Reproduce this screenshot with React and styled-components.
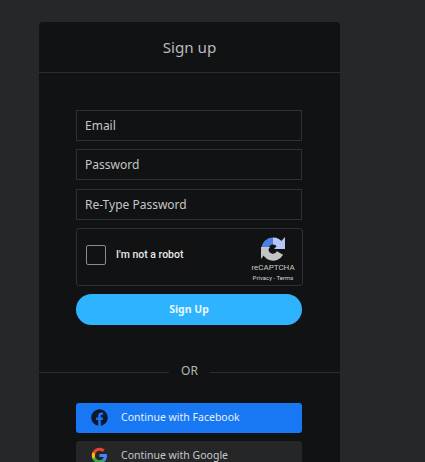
import styled, { createGlobalStyle } from "styled-components";
import { FaFacebook } from "react-icons/fa";

const GlobalStyle = createGlobalStyle`
  html, body {
    margin: 0;
    height: 100%;
    overflow: hidden;
    background: #25272a;
    font-family: "Noto Sans", sans-serif;
  }
`;

const Page = styled.div`
  padding: 22px 85px 0 39px;
  height: 440px;
  overflow: hidden;
`;

const Card = styled.div`
  width: 301px;
  height: 500px;
  background: #111213;
  border-radius: 4px 4px 0 0;
`;

const Header = styled.h1`
  margin: 0;
  height: 50px;
  display: flex;
  align-items: center;
  justify-content: center;
  border-bottom: 1px solid #2b2d30;
  font-size: 15.2px;
  font-weight: 400;
  color: #b9bbbd;
`;

const Form = styled.form`
  padding: 37px 38px 0 37px;
  display: flex;
  flex-direction: column;
`;

const Input = styled.input`
  box-sizing: border-box;
  width: 226px;
  height: 31px;
  margin-bottom: 8.25px;
  padding: 0 8px;
  background: transparent;
  border: 1px solid #2e3033;
  outline: none;
  font-family: inherit;
  font-size: 12px;
  color: #c4c5c7;
  &::placeholder {
    color: #c4c5c7;
    opacity: 1;
  }
`;

const Captcha = styled.div`
  box-sizing: border-box;
  width: 227px;
  height: 58px;
  padding: 0 7px 0 9px;
  display: flex;
  align-items: center;
  border: 1px solid #2e3033;
  border-radius: 3px;
`;

const Check = styled.div`
  box-sizing: border-box;
  width: 20px;
  height: 20px;
  margin-bottom: 4px;
  border: 1px solid #8a8b8c;
  border-radius: 2px;
`;

const CaptchaLabel = styled.span`
  margin: 0 0 4px 10px;
  flex: 1;
  font-family: Roboto, sans-serif;
  font-size: 10.5px;
  font-weight: 500;
  color: #e8e8e8;
`;

const Brand = styled.div`
  width: 44px;
  margin-top: 4px;
  display: flex;
  flex-direction: column;
  align-items: center;
  color: #c9c9c9;
  font-family: Roboto, sans-serif;
`;

const BrandName = styled.span`
  font-size: 8px;
  line-height: 12px;
  margin-top: 1px;
`;

const BrandLinks = styled.span`
  font-size: 6px;
  line-height: 8px;
  white-space: nowrap;
  color: #d6d6d6;
`;

const Submit = styled.button`
  width: 226px;
  height: 31px;
  margin-top: 8px;
  border: none;
  border-radius: 16px;
  background: #2eb4ff;
  color: #e8f6ff;
  font-family: inherit;
  font-size: 10.5px;
  font-weight: 700;
`;

const Divider = styled.div`
  margin-top: 38px;
  height: 20px;
  display: flex;
  align-items: center;
  gap: 12px;
  font-size: 12px;
  color: #b4b6b8;
  &::before,
  &::after {
    content: "";
    flex: 1;
    height: 1px;
    background: #2b2d30;
  }
`;

const DividerLabel = styled.span`
  padding-bottom: 4px;
`;

const Socials = styled.div`
  padding: 20px 38px 0 37px;
  display: flex;
  flex-direction: column;
  gap: 8px;
`;

const Social = styled.button`
  width: 226px;
  height: 30px;
  padding: 0 0 0 15px;
  display: flex;
  align-items: center;
  gap: 13px;
  border: none;
  border-radius: 3px;
  background: ${(p) => p.$bg};
  color: ${(p) => p.$color};
  font-family: inherit;
  font-size: 10.5px;
  svg {
    flex: none;
  }
`;

const SocialLabel = styled.span`
  padding-bottom: 2px;
`;

const FacebookIcon = styled(FaFacebook)`
  color: #10192b;
`;

function RecaptchaLogo() {
  return (
    <svg width="24" height="25" viewBox="0 0 24 25" fill="none">
      <path d="M4 13 A8 8 0 0 1 12 5" stroke="#4c7fe0" strokeWidth="7" />
      <path d="M12 5 A8 8 0 0 1 19 9" stroke="#b7c6f6" strokeWidth="7" />
      <path d="M24 1 V13 H13 Z" fill="#b7c6f6" />
      <path d="M4 13 A8 8 0 0 0 19 17" stroke="#c4c4c4" strokeWidth="7" />
      <path d="M0 23 V11 H9 Z" fill="#c4c4c4" />
    </svg>
  );
}

function GoogleIcon() {
  return (
    <svg width="17" height="17" viewBox="0 0 48 48">
      <path fill="#4285F4" d="M45.1 24.5c0-1.6-.1-3.1-.4-4.500H24v8.500h11.800c-.5 2.800-2 5.100-4.400 6.700v5.600h7.100c4.200-3.800 6.600-9.500 6.600-16.300z" />
      <path fill="#34A853" d="M24 46c5.900 0 10.900-2 14.500-5.300l-7.100-5.500c-2 1.300-4.500 2.100-7.400 2.100-5.700 0-10.500-3.800-12.200-9H4.500v5.700C8.100 41.200 15.500 46 24 46z" />
      <path fill="#FBBC05" d="M11.800 28.300c-.4-1.300-.7-2.800-.7-4.300s.3-3 .7-4.300V14H4.500C3 17 2.200 20.400 2.200 24s.8 7 2.300 10l7.300-5.700z" />
      <path fill="#EA4335" d="M24 10.700c3.200 0 6.100 1.100 8.400 3.300l6.300-6.300C34.900 4.100 29.900 2 24 2 15.500 2 8.100 6.800 4.500 14l7.300 5.700c1.700-5.200 6.500-9 12.200-9z" />
    </svg>
  );
}

export default function App() {
  return (
    <>
      <GlobalStyle />
      <Page>
        <Card>
          <Header>Sign up</Header>
          <Form>
            <Input placeholder="Email" />
            <Input placeholder="Password" type="password" />
            <Input placeholder="Re-Type Password" type="password" />
            <Captcha>
              <Check />
              <CaptchaLabel>I'm not a robot</CaptchaLabel>
              <Brand>
                <RecaptchaLogo />
                <BrandName>reCAPTCHA</BrandName>
                <BrandLinks>Privacy - Terms</BrandLinks>
              </Brand>
            </Captcha>
            <Submit type="button">Sign Up</Submit>
          </Form>
          <Divider>
            <DividerLabel>OR</DividerLabel>
          </Divider>
          <Socials>
            <Social type="button" $bg="#1877f2" $color="#e6f0ff">
              <FacebookIcon size={17} />
              <SocialLabel>Continue with Facebook</SocialLabel>
            </Social>
            <Social type="button" $bg="#242628" $color="#c8c9ca">
              <GoogleIcon />
              <SocialLabel>Continue with Google</SocialLabel>
            </Social>
          </Socials>
        </Card>
      </Page>
    </>
  );
}
